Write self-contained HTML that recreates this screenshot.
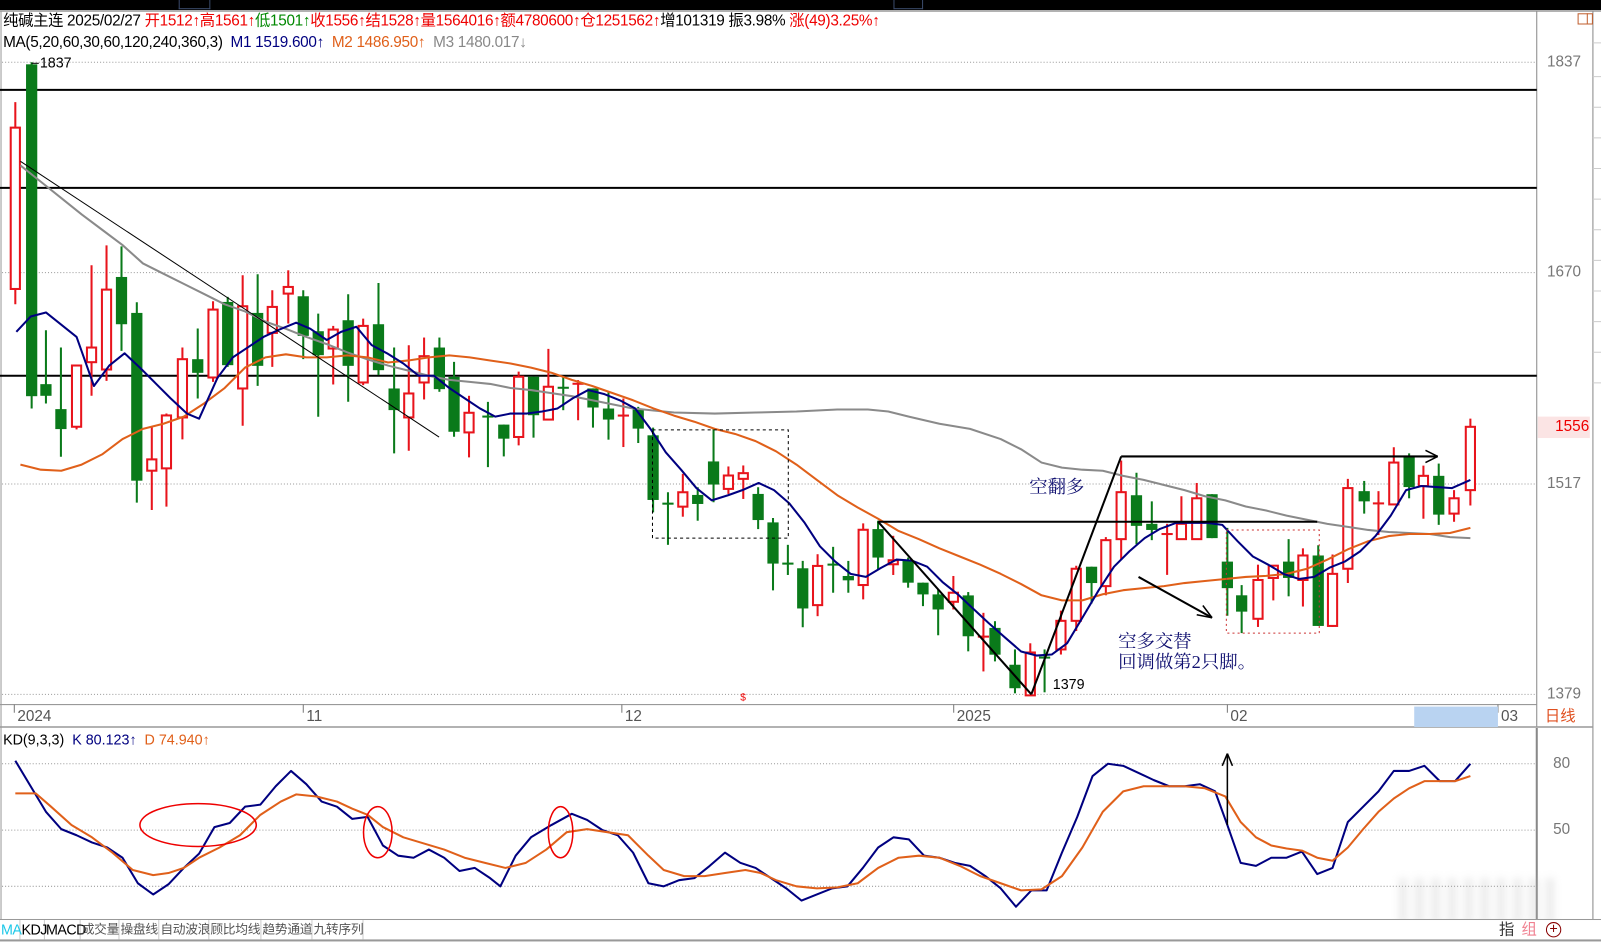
<!DOCTYPE html>
<html><head><meta charset="utf-8"><style>
*{margin:0;padding:0;box-sizing:border-box}
body{width:1601px;height:943px;overflow:hidden;background:#fff;font-family:"Liberation Sans","Noto Sans CJK SC",sans-serif;position:relative}
#w{position:absolute;left:0;top:0;width:1568px;height:924px;transform:scale(1.0211);transform-origin:0 0}
.t{position:absolute;white-space:nowrap;font-size:15px;line-height:16px}
svg{position:absolute;left:0;top:0}
.tab{white-space:nowrap;overflow:visible;border-right:1px solid #ccc;padding-left:1px;font-size:14px;letter-spacing:-0.5px}
.tab.c{font-size:12.5px;color:#555;letter-spacing:-0.3px}
</style></head><body><div id="w">
<div style="position:absolute;left:0;top:0;width:1568px;height:10px;background:#000"></div>
<div style="position:absolute;left:175px;top:0;width:31px;height:9px;border:1px solid #3a4a6a;border-top:none"></div>
<div style="position:absolute;left:875px;top:0;width:29px;height:9px;border:1px solid #3a4a6a;border-top:none"></div>

<div class="t" style="left:3px;top:13px;letter-spacing:-0.3px"><span>纯碱主连 2025/02/27 </span><span style="color:#e00">开1512↑高1561↑</span><span style="color:#080">低1501↑</span><span style="color:#e00">收1556↑结1528↑量1564016↑额4780600↑仓1251562↑</span><span>增101319 振3.98% </span><span style="color:#e00">涨(49)3.25%↑</span></div>
<div class="t" style="left:3px;top:34px;letter-spacing:-0.3px">MA(5,20,60,30,60,120,240,360,3) &nbsp;<span style="color:#000080">M1 1519.600↑</span> &nbsp;<span style="color:#e0601a">M2 1486.950↑</span> &nbsp;<span style="color:#888">M3 1480.017↓</span></div>

<svg id="s" width="1568" height="924" xmlns="http://www.w3.org/2000/svg"></svg>

<div class="t" style="left:39px;top:53px;font-size:14px">1837</div>
<div class="t" style="left:1031px;top:662px;font-size:14px">1379</div>
<div class="t" style="left:1515px;top:53px;color:#777;font-size:15px">1837</div>
<div class="t" style="left:1515px;top:259px;color:#777;font-size:15px">1670</div>
<div class="t" style="left:1515px;top:466px;color:#777;font-size:15px">1517</div>
<div class="t" style="left:1515px;top:672px;color:#777;font-size:15px">1379</div>
<div style="position:absolute;left:1506px;top:408px;width:51px;height:21px;background:#fbe4e4"></div>
<div class="t" style="left:1523px;top:410px;color:#e00;font-size:15px">1556</div>
<div class="t" style="left:1008px;top:467px;color:#101070;font-size:18px;line-height:20px;font-family:'Liberation Serif','Noto Serif CJK SC',serif">空翻多</div>
<div class="t" style="left:1095px;top:618px;color:#101070;font-size:18px;line-height:20px;font-family:'Liberation Serif','Noto Serif CJK SC',serif">空多交替<br>回调做第2只脚。</div>

<div style="position:absolute;left:1385px;top:692px;width:82px;height:20px;background:#b9d3f1"></div>
<div class="t" style="left:17px;top:694px;color:#555">2024</div>
<div class="t" style="left:300px;top:694px;color:#555">11</div>
<div class="t" style="left:612px;top:694px;color:#555">12</div>
<div class="t" style="left:937px;top:694px;color:#555">2025</div>
<div class="t" style="left:1205px;top:694px;color:#555">02</div>
<div class="t" style="left:1470px;top:694px;color:#555">03</div>
<div class="t" style="left:1513px;top:694px;color:#e05020">日线</div>
<div class="t" style="left:725px;top:676px;color:#e00;font-size:10px">$</div>

<div class="t" style="left:3px;top:716px;font-size:14px">KD(9,3,3) &nbsp;<span style="color:#000080">K 80.123↑</span> &nbsp;<span style="color:#e0601a">D 74.940↑</span></div>
<div class="t" style="left:1521px;top:740px;color:#777">80</div>
<div class="t" style="left:1521px;top:805px;color:#777">50</div>

<div style="position:absolute;left:1370px;top:860px;width:160px;height:45px;filter:blur(4px);opacity:.3;background:repeating-linear-gradient(90deg,#bbb 0 8px,transparent 8px 16px)"></div>

<div style="position:absolute;left:0;top:900px;width:1568px;height:21px;border-top:1px solid #999;background:#fff"></div>
<div style="position:absolute;left:0;top:920px;width:1568px;height:4px;background:#fff;border-top:2px solid #999"></div>
<div style="position:absolute;left:0;top:901px;height:19px;display:flex;line-height:18px">
<span class="tab" style="width:20px;color:#1cc8e8">MA</span>
<span class="tab" style="width:24px">KDJ</span>
<span class="tab" style="width:35px">MACD</span>
<span class="tab c" style="width:38px">成交量</span>
<span class="tab c" style="width:39px">操盘线</span>
<span class="tab c" style="width:49px">自动波浪</span>
<span class="tab c" style="width:51px">顾比均线</span>
<span class="tab c" style="width:50px">趋势通道</span>
<span class="tab c" style="width:50px">九转序列</span>
</div>
<div class="t" style="left:1468px;top:903px;color:#333">指</div>
<div class="t" style="left:1490px;top:903px;color:#f08090">组</div>
<div style="position:absolute;left:1514px;top:903px;width:15px;height:15px;border:1.5px solid #800;border-radius:50%;color:#800;font-size:14px;line-height:11px;text-align:center">+</div>
<div style="position:absolute;left:1545px;top:13px;width:15px;height:11px;border:1px solid #c06030"></div>
<div style="position:absolute;left:1554px;top:13px;width:1px;height:11px;background:#c06030"></div>

<script>
const S=document.getElementById('s');let h='';
const L=(x1,y1,x2,y2,c,w,d)=>{h+=`<line x1="${x1}" y1="${y1}" x2="${x2}" y2="${y2}" stroke="${c}" stroke-width="${w||1}" ${d?`stroke-dasharray="${d}"`:''}/>`};
const P=(pts,c,w)=>{h+=`<polyline fill="none" stroke="${c}" stroke-width="${w}" stroke-linejoin="round" points="${pts.map(p=>p.join(',')).join(' ')}"/>`};
L(0,11,1568,11,'#999',1);L(1,11,1,900,'#999',1);
L(1505,11,1505,712,'#888',1);L(1560,11,1560,900,'#888',1);
L(1505,713,1505,900,'#888',2);
for(const y of [61,267,474,680]) L(2,y,1505,y,'#999',1,'1,2');
for(const y of [748,813,868]) L(2,y,1505,y,'#999',1,'1,2');
L(0,690,1505,690,'#999',1);L(0,712,1560,712,'#999',1.5);
for(const x of [14,297,609,934,1202,1467]) L(x,690,x,698,'#777',1);
for(const y of [42,75,105,135,165,195,225,255,285,315,345,375]) L(1560,y,1568,y,'#ccc',1);
for(const y of [88,184,368]) L(0,y,1505,y,'#000',2);
const C=[];
function add(tx,ty,arr){for(const a of arr){C.push([tx(a[0]),ty(a[1]),ty(a[2]),ty(a[3]),ty(a[4]),a[5]])}}
C.push([15,125,283,100,298,'r'],[31,63,388,61,400,'g']);
add(x=>0.326*x,y=>225.6+0.326*y,[
[138,462,497,300,520,'g'],[183,537,597,352,680,'g'],[230,406,590,406,598,'r'],[275,352,396,105,497,'r'],[320,178,418,45,452,'r'],[365,140,282,48,362,'g'],[411,248,752,216,818,'g'],[456,688,722,588,840,'r'],[500,556,715,550,830,'r'],[548,387,562,352,628,'r'],[594,387,428,295,505,'g'],[640,238,442,213,455,'r'],[684,215,405,200,410,'g'],[729,228,475,135,587,'r'],[774,248,407,132,467,'g'],[818,230,308,180,410,'r'],[866,170,190,120,280,'r'],[911,198,317,180,387,'g'],[956,303,375,250,560,'g'],[1001,298,355,287,463,'r'],[1046,270,407,192,515,'g'],[1091,287,457,265,465,'r'],[1137,282,420,158,435,'g'],[1184,475,540,352,670,'g'],[1228,490,562,345,662,'r'],[1274,378,457,322,508,'r'],[1320,352,477,322,485,'g'],[1364,440,605,395,620,'g'],[1409,548,607,497,682,'r']]);
add(x=>473+0.3235*x,y=>323+0.328*y,[
[15,256,260,215,410,'g'],[63,283,325,283,378,'g'],[108,140,320,125,345,'r'],[153,140,255,140,322,'g'],[198,170,268,57,270,'r'],[243,170,174,140,240,'g'],[288,158,162,150,270,'r'],[333,175,232,175,292,'g'],[380,235,268,185,328,'g'],[425,253,257,205,350,'r'],[470,238,295,230,338,'g'],[515,315,508,292,545,'g'],[560,516,520,485,642,'g'],[605,485,528,430,558,'r'],[650,493,520,470,570,'g'],[698,393,462,295,515,'g'],[743,435,475,408,490,'r'],[788,428,445,405,505,'r'],[833,490,568,470,595,'g'],[878,575,698,562,778,'g'],[923,695,699,642,732,'g'],[968,712,832,690,888,'g'],[1013,705,822,670,855,'r'],[1060,698,702,648,785,'g'],[1106,735,748,690,785,'g'],[1151,597,762,578,805,'r'],[1196,595,680,570,715,'g'],[1242,688,700,615,732,'r'],[1287,690,755,680,770,'g'],[1332,755,790,755,825,'g'],[1378,790,835,775,912,'g'],[1424,785,812,735,835,'r'],[1469,793,915,783,960,'g'],[1515,913,917,845,1020,'r'],[1550,890,970,870,990,'g']]);
C.push(
[994,651,674,636,679,'g'],[1009,639,681,630,681,'r'],[1023,643,645,636,678,'g'],[1039,608,636,598,641,'r'],[1054,557,608,554,618,'r'],[1069,555,571,555,591,'g'],[1083,529,574,526,583,'r'],[1098,482,528,451,548,'r'],[1113,485,515,463,533,'g'],[1128,513,519,491,529,'g'],[1143,522,524,513,563,'r'],[1157,513,528,486,528,'r'],[1172,488,528,473,528,'r'],[1187,484,527,484,527,'g'],[1202,550,576,517,603,'g'],[1216,583,599,573,620,'g'],[1232,568,606,553,614,'r'],[1247,554,566,554,588,'r'],[1262,550,566,528,584,'g'],[1276,544,568,537,594,'r'],[1291,544,613,534,613,'g'],[1305,562,613,543,614,'r'],[1320,478,557,469,571,'r'],[1336,481,491,471,503,'g'],[1350,492,494,481,524,'r'],[1365,453,494,438,494,'r'],[1380,448,477,444,488,'g'],[1394,466,476,456,508,'r'],[1409,466,504,454,514,'g'],[1424,488,503,480,511,'r'],[1440,418,480,410,495,'r']);
for(const c of C){const[x,bt,bb,wt,wb,k]=c;const col=k=='r'?'#e8141c':'#0a7a1a';const w=11;
 L(x,wt,x,wb,col,2);
 if(bb-bt<3){L(x-w/2,bt+1,x+w/2,bt+1,col,2)}
 else if(k=='r'){h+=`<rect x="${x-w/2+1}" y="${bt}" width="${w-2}" height="${bb-bt}" fill="#fff" stroke="${col}" stroke-width="2"/>`}
 else{h+=`<rect x="${x-w/2}" y="${bt}" width="${w}" height="${bb-bt}" fill="${col}"/>`}}
L(31,62,38,62,'#000',1);
P([[20,162],[40,178],[60,194],[80,210],[100,225],[120,240],[140,258],[160,268],[180,278],[200,288],[220,298],[240,305],[260,315],[280,322],[300,330],[320,337],[340,345],[360,352],[380,358],[400,363],[420,368],[440,372],[460,374],[480,376],[500,380],[520,382],[540,385],[560,388],[580,392],[600,396],[620,400],[640,402],[660,404],[700,405],[740,404],[780,403],[820,401],[850,401],[870,403],[890,408],[920,415],[950,420],[980,430],[1000,440],[1020,453],[1040,458],[1060,460],[1080,461],[1100,466],[1120,470],[1140,475],[1160,480],[1180,486],[1200,490],[1220,496],[1240,500],[1260,505],[1280,509],[1300,513],[1320,516],[1340,519],[1360,521],[1380,522],[1400,523],[1420,526],[1440,527]],'#8a8a8a',2);
P([[20,455],[40,460],[60,461],[80,455],[100,445],[120,430],[140,420],[160,415],[180,408],[200,395],[220,380],[240,360],[260,350],[280,347],[300,350],[320,350],[340,348],[360,350],[380,355],[400,353],[420,350],[440,348],[460,350],[480,353],[500,356],[520,360],[540,365],[560,372],[580,378],[600,385],[620,392],[640,400],[660,407],[680,413],[700,420],[720,425],[740,432],[760,442],[780,455],[800,470],[820,485],[840,497],[860,508],[880,520],[900,528],[920,537],[940,545],[960,553],[980,562],[1000,572],[1020,583],[1040,588],[1060,588],[1080,582],[1100,578],[1120,576],[1140,574],[1160,571],[1180,569],[1200,567],[1220,565],[1240,564],[1260,562],[1280,557],[1300,548],[1320,538],[1340,530],[1360,525],[1380,523],[1400,523],[1420,522],[1440,517]],'#e0601a',2);
P([[16,325],[30,310],[45,306],[75,330],[92,378],[107,358],[122,346],[137,360],[152,375],[167,390],[183,405],[195,410],[213,370],[228,350],[243,340],[258,330],[273,323],[290,316],[304,322],[320,333],[334,325],[349,320],[364,338],[379,346],[395,356],[410,368],[425,368],[440,380],[455,390],[470,400],[485,408],[500,405],[516,405],[531,403],[546,400],[561,390],[576,382],[592,386],[607,392],[622,400],[637,420],[652,443],[667,460],[682,478],[697,490],[713,485],[727,480],[743,473],[758,480],[773,493],[788,512],[803,535],[818,550],[833,562],[848,565],[863,556],[878,548],[893,549],[908,555],[923,570],[938,582],[953,596],[968,610],[985,625],[1000,638],[1015,642],[1030,641],[1045,630],[1060,605],[1076,578],[1091,555],[1106,540],[1121,527],[1136,518],[1152,512],[1167,512],[1182,512],[1197,514],[1212,530],[1227,545],[1242,553],[1257,562],[1272,567],[1287,565],[1302,556],[1317,550],[1332,540],[1347,525],[1362,505],[1377,480],[1392,476],[1407,477],[1422,478],[1440,470]],'#000080',2);
L(20,158,430,428,'#000',1);
L(860,511,1290,511,'#000',2);L(860,511,1010,680,'#000',2);L(1010,680,1098,447,'#000',2);L(1098,447,1408,447,'#000',2);
L(1396,441,1408,447,'#000',1.5);L(1396,453,1408,447,'#000',1.5);
L(1115,565,1187,605,'#000',2);L(1172,602,1187,605,'#000',1.5);L(1178,593,1187,605,'#000',1.5);
h+=`<rect x="639" y="421" width="133" height="106" fill="none" stroke="#000" stroke-dasharray="3,3"/>`;
h+=`<rect x="1201" y="519" width="91" height="101" fill="none" stroke="#c33" stroke-dasharray="2,3"/>`;
P([[15,745],[30,770],[45,795],[60,812],[75,818],[90,825],[105,830],[120,840],[135,865],[150,876],[165,866],[180,850],[195,836],[210,810],[225,806],[240,790],[255,788],[270,770],[285,755],[300,768],[315,785],[330,790],[345,802],[360,800],[375,828],[390,838],[405,840],[420,832],[435,840],[450,853],[465,850],[480,860],[490,868],[505,838],[520,820],[540,808],[560,797],[575,803],[590,813],[605,818],[620,835],[635,865],[650,868],[665,862],[680,860],[695,848],[710,835],[725,845],[740,850],[755,860],[770,870],[785,882],[800,876],[815,870],[830,868],[845,850],[860,830],[875,820],[890,822],[905,838],[920,840],[935,845],[950,848],[965,858],[980,870],[995,888],[1010,872],[1025,872],[1040,835],[1055,800],[1070,760],[1085,748],[1100,750],[1115,757],[1130,764],[1145,770],[1160,770],[1175,768],[1190,775],[1202,808],[1215,845],[1230,848],[1245,840],[1260,840],[1275,834],[1290,856],[1305,850],[1320,805],[1335,790],[1350,775],[1365,755],[1380,755],[1395,750],[1410,765],[1425,765],[1440,748]],'#000080',2);
P([[15,777],[35,777],[50,790],[70,808],[90,820],[110,835],[130,852],[150,857],[165,855],[180,850],[195,840],[215,830],[235,818],[255,798],[275,785],[290,778],[310,780],[330,785],[345,792],[360,798],[375,810],[395,820],[415,826],[435,832],[455,840],[475,845],[495,850],[515,845],[535,832],[555,815],[575,812],[595,815],[615,818],[635,838],[650,852],[670,858],[690,858],[710,855],[730,852],[745,855],[760,862],[780,868],[800,870],[820,869],[840,865],[860,850],[880,840],[900,838],[920,840],[940,848],[960,858],[980,865],[1000,872],[1020,871],[1040,858],[1060,830],[1080,795],[1100,775],[1120,770],[1140,770],[1160,770],[1180,772],[1200,780],[1215,805],[1230,820],[1245,828],[1260,831],[1275,833],[1290,840],[1305,843],[1320,830],[1335,812],[1350,795],[1365,782],[1380,772],[1395,765],[1410,765],[1425,765],[1440,760]],'#e0601a',2);
h+=`<ellipse cx="194" cy="808" rx="57" ry="21" fill="none" stroke="#e00" stroke-width="1.5"/>`;
h+=`<ellipse cx="370" cy="815" rx="14" ry="25" fill="none" stroke="#e00" stroke-width="1.5"/>`;
h+=`<ellipse cx="549" cy="815" rx="12" ry="25" fill="none" stroke="#e00" stroke-width="1.5"/>`;
L(1202,808,1202,738,'#000',1.5);L(1197,750,1202,738,'#000',1.5);L(1207,750,1202,738,'#000',1.5);
S.innerHTML=h;
</script>
</div></body></html>
